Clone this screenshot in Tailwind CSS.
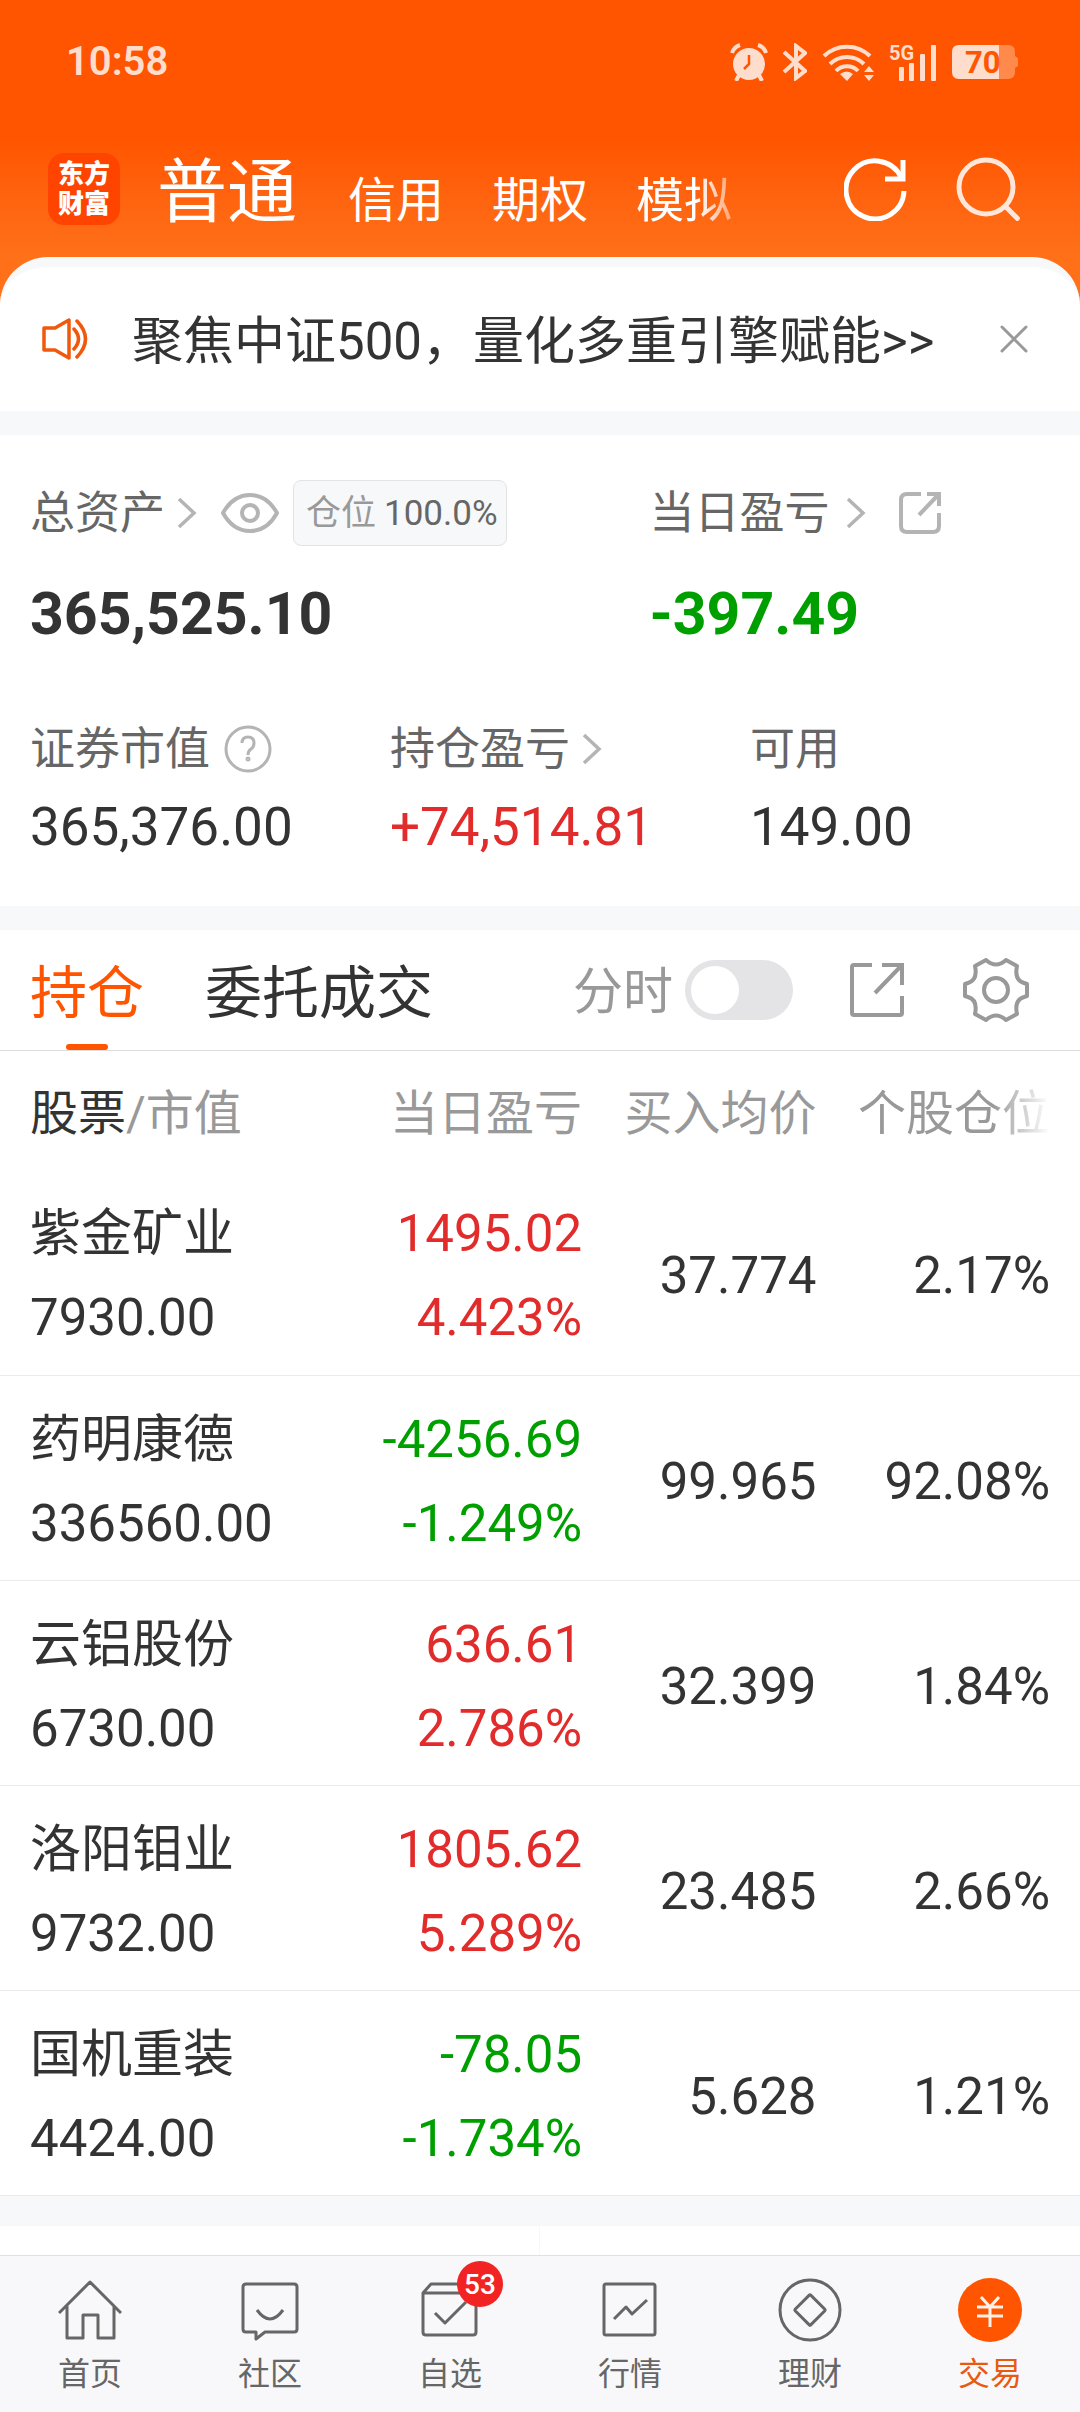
<!DOCTYPE html>
<html lang="zh-CN">
<head>
  <meta charset="UTF-8" />
  <meta name="viewport" content="width=device-width, initial-scale=1.0" />
  <title>东方财富 | 交易</title>

  <!-- Tailwind CSS -->
  <script src="https://cdn.jsdelivr.net/npm/@tailwindcss/browser@4"></script>

  <style>
    body {
      font-family: Roboto, 'Noto Sans CJK SC', sans-serif;
    }
  </style>
</head>

<body class="bg-white text-[#333] min-h-screen flex flex-col">

  <!-- Top Area -->
  <div class="bg-linear-to-b from-[#ff5500] from-34% to-[#ff7019] to-62%">

    <!-- Status Bar -->
    <div class="flex items-center justify-between h-[124px] pl-[66px] pr-[62px] text-[#ffddcc]">
      <span class="text-[40px] leading-none font-semibold">10:58</span>
      <div class="flex items-center gap-[15px]">
        <svg class="w-[38px] h-[38px]" viewBox="0 0 38 38" fill="none">
          <circle cx="19" cy="21" r="16" fill="currentColor" />
          <path d="M2 10A12 12 0 0 1 10 2M36 10A12 12 0 0 0 28 2" stroke="currentColor" stroke-width="4" />
          <path d="M9 32l-3 6M29 32l3 6" stroke="currentColor" stroke-width="4" />
          <path d="M19 12v9l-5 5" stroke="#ff5500" stroke-width="2.5" />
        </svg>
        <svg class="w-6 h-[38px]" viewBox="0 0 24 38" fill="none" stroke="currentColor" stroke-width="4">
          <path d="M1 9l21 19-9 7V3l9 7L1 29" />
        </svg>
        <svg class="w-[52px] h-[38px]" viewBox="0 0 52 38" fill="none">
          <path d="M2 13a33 33 0 0 1 46 0M8 21a24 24 0 0 1 34 0M14 28a15 15 0 0 1 22 0" stroke="currentColor" stroke-width="4" />
          <path d="M18 31q7-5 13 0l-6 7zM42 29l5-6 5 6zM42 32h10l-5 6z" fill="currentColor" />
        </svg>
        <svg class="w-12 h-[38px] overflow-visible" viewBox="0 0 48 38" fill="currentColor">
          <text x="0" y="17" font-size="20" font-weight="700">5G</text>
          <rect x="10" y="24" width="5" height="14" rx="1" />
          <rect x="20" y="20" width="5" height="18" rx="1" />
          <rect x="31" y="11" width="5" height="27" rx="1" />
          <rect x="42" y="2" width="5" height="36" rx="1" />
        </svg>
        <svg class="w-[66px] h-[34px] overflow-visible" viewBox="0 0 66 34">
          <path d="M47 0h9q7 0 7 7v4l3 2v8l-3 2v4q0 7-7 7h-9z" fill="#ff8a4c" />
          <path d="M47 0H7Q0 0 0 7v20q0 7 7 7h40z" fill="currentColor" />
          <text x="13" y="28" font-size="31" font-weight="700" fill="#ff5500">70</text>
        </svg>
      </div>
    </div>

    <!-- Account Tabs -->
    <header class="flex items-center h-[133px] pl-12 pr-[60px] pb-[4px] text-white">
      <div class="w-[72px] h-[72px] rounded-2xl bg-[#ff4400] flex items-center justify-center text-center text-[26px] leading-[30px] font-black">
        <span>东方<br />财富</span>
      </div>
      <nav class="flex items-baseline gap-12 ml-[37px] pt-2 text-5xl leading-none">
        <a href="#" class="text-[70px] mr-[3px]">普通</a>
        <a href="#">信用</a>
        <a href="#">期权</a>
        <a href="#" class="[mask-image:linear-gradient(to_right,black_65%,rgba(0,0,0,0.4))]">模拟</a>
      </nav>
      <div class="flex gap-12 ml-auto">
        <button type="button" aria-label="刷新">
          <svg class="w-16 h-16" viewBox="0 0 64 64" fill="none" stroke="currentColor" stroke-width="5">
            <path d="M60 34A29 29 0 1 1 57 20" />
            <path d="M59 3v19H41" />
          </svg>
        </button>
        <button type="button" aria-label="搜索">
          <svg class="w-16 h-16" viewBox="0 0 64 64" fill="none" stroke="#ffe6d9" stroke-width="5">
            <circle cx="30" cy="30" r="27" />
            <path d="M49 49l14 14" />
          </svg>
        </button>
      </div>
    </header>

    <!-- Notice Bar -->
    <div class="bg-white border-t-[10px] border-[#f7f8fa] rounded-t-[48px] h-[154px] flex items-center pl-[42px] pr-12">
      <svg class="w-12 h-12" viewBox="0 0 48 48" fill="none" stroke="#f0580c" stroke-width="3.5" stroke-linejoin="round" stroke-linecap="round">
        <path d="M2 13h11l14-8v38l-14-8H2z" />
        <path d="M32 14q9 10 0 20M35 6q17 18 0 36" />
      </svg>
      <a href="#" class="ml-[42px] pt-[5px] text-[51px] leading-none whitespace-nowrap">聚焦中证500，量化多重引擎赋能&gt;&gt;</a>
      <button type="button" class="ml-auto" aria-label="关闭">
        <svg class="w-9 h-9" viewBox="0 0 36 36" stroke="#999" stroke-width="3" stroke-linecap="round">
          <path d="M6 6l24 24M30 6L6 30" />
        </svg>
      </button>
    </div>
  </div>

  <!-- Asset Summary -->
  <section class="border-t-[24px] border-[#f7f8fa] pl-[30px] pt-[45px] h-[495px]">
    <div class="grid grid-cols-[59fr_41fr]">
      <div>
        <div class="flex items-center h-[66px] text-[45px] leading-none text-[#666]">
          总资产
          <svg class="w-5 h-8 ml-3" viewBox="0 0 20 32" fill="none" stroke="#b4b4b4" stroke-width="3.5"><path d="M2 2l15 14L2 30" /></svg>
          <button type="button" class="ml-6" aria-label="隐藏金额">
            <svg class="w-[58px] h-10" viewBox="0 0 58 40" fill="none" stroke="#b4b4b4" stroke-width="4" stroke-linejoin="round">
              <path d="M2 20Q12 2 29 2t27 18q-10 18-27 18T2 20z" />
              <circle cx="29" cy="20" r="8" />
            </svg>
          </button>
          <span class="ml-[14px] h-[66px] pl-3 pr-2 flex items-center gap-2 border border-[#e2e3e5] rounded-lg bg-[#f7f8fa] text-[35px]"><span class="text-[#999]">仓位</span>100.0%</span>
        </div>
        <p class="mt-8 text-[59px] leading-[72px] font-bold">365,525.10</p>
      </div>
      <div>
        <div class="flex items-center h-[66px] text-[45px] leading-none text-[#666]">
          当日盈亏
          <svg class="w-5 h-8 ml-4" viewBox="0 0 20 32" fill="none" stroke="#b4b4b4" stroke-width="3.5"><path d="M2 2l15 14L2 30" /></svg>
          <button type="button" class="ml-8" aria-label="分享">
            <svg class="w-11 h-11" viewBox="0 0 44 44" fill="none" stroke="#b4b4b4" stroke-width="4">
              <path d="M23 3H9Q3 3 3 9v26q0 6 6 6h26q6 0 6-6V22" />
              <path d="M29 3h12v12M41 3L21 24" />
            </svg>
          </button>
        </div>
        <p class="mt-8 text-[59px] leading-[72px] font-bold text-[#009f00]">-397.49</p>
      </div>
    </div>

    <div class="grid grid-cols-[36fr_36fr_33fr] mt-[66px]">
      <div>
        <div class="flex items-center h-[66px] text-[45px] leading-none text-[#666]">
          证券市值
          <svg class="w-12 h-12 ml-[14px]" viewBox="0 0 48 48" fill="none" stroke="#b4b4b4" stroke-width="3">
            <circle cx="24" cy="24" r="22" />
            <path d="M18 18q0-6 6-6t6 6q0 4-3 6t-3 6" />
            <circle cx="24" cy="34" r="1" />
          </svg>
        </div>
        <p class="mt-3 text-[53px] leading-[66px]">365,376.00</p>
      </div>
      <div>
        <div class="flex items-center h-[66px] text-[45px] leading-none text-[#666]">
          持仓盈亏
          <svg class="w-5 h-8 ml-3" viewBox="0 0 20 32" fill="none" stroke="#b4b4b4" stroke-width="3.5"><path d="M2 2l15 14L2 30" /></svg>
        </div>
        <p class="mt-3 text-[53px] leading-[66px] text-[#e22b2b]">+74,514.81</p>
      </div>
      <div>
        <div class="flex items-center h-[66px] text-[45px] leading-none text-[#666]">可用</div>
        <p class="mt-3 text-[53px] leading-[66px]">149.00</p>
      </div>
    </div>
  </section>

  <!-- Holdings Tabs -->
  <section class="border-t-[24px] border-[#f7f8fa]">
    <div class="flex items-center h-[121px] pl-[30px] pr-[51px] border-b border-[#ddd]">
      <a href="#" class="relative h-full flex items-center pt-[6px] text-[57px] leading-none text-[#ff5500]">
        持仓
        <span class="absolute bottom-0 left-1/2 -translate-x-1/2 w-[42px] h-[6px] rounded-full bg-[#ff5500]"></span>
      </a>
      <a href="#" class="ml-[61px] pt-[6px] text-[57px] leading-none">委托成交</a>
      <label for="timeline" class="ml-auto pt-1 text-[50px] leading-none text-[#999]">分时</label>
      <input type="checkbox" id="timeline"
        class="appearance-none ml-3 w-[108px] h-[60px] rounded-full bg-[#e4e4e6] p-[6px] flex before:block before:w-12 before:h-12 before:rounded-full before:bg-white" />
      <button type="button" class="ml-14" aria-label="导出">
        <svg class="w-14 h-14" viewBox="0 0 56 56" fill="none" stroke="#999" stroke-width="4">
          <path d="M23 3H5q-2 0-2 2v46q0 2 2 2h46q2 0 2-2V34" />
          <path d="M33 3h20v20M53 3L26 31" />
        </svg>
      </button>
      <button type="button" class="ml-[58px]" aria-label="设置">
        <svg class="w-[66px] h-16" viewBox="0 0 66 64" fill="none" stroke="#999" stroke-width="4" stroke-linejoin="round">
          <path d="M23 2Q33 11 43 2L54 8Q51 22 61 25L64 26V38L61 39Q51 42 54 56L43 62Q33 53 23 62L12 56Q15 42 5 39L2 38V26L5 25Q15 22 12 8Z" />
          <circle cx="33" cy="32" r="12" />
        </svg>
      </button>
    </div>

    <!-- Holdings Table -->
    <table class="w-full table-fixed text-right text-[51px] leading-[84px]">
      <colgroup>
        <col class="w-[32.2%]" />
        <col class="w-[21.7%]" />
        <col class="w-[21.7%]" />
        <col />
      </colgroup>
      <thead>
        <tr class="h-[119px] text-5xl text-[#999] *:pt-[6px]">
          <th class="font-normal text-left pl-[30px]"><span class="text-[#333]">股票</span>/市值</th>
          <th class="font-normal whitespace-nowrap">当日盈亏</th>
          <th class="font-normal whitespace-nowrap">买入均价</th>
          <th class="font-normal whitespace-nowrap pr-[30px]"><span class="[mask-image:linear-gradient(to_right,black_70%,transparent)]">个股仓位</span></th>
        </tr>
      </thead>
      <tbody>
        <tr class="h-[205px] border-b border-[#ebebeb] *:pt-[8px]">
          <td class="text-left pl-[30px]">紫金矿业<br />7930.00</td>
          <td class="text-[#e22b2b]">1495.02<br />4.423%</td>
          <td>37.774</td>
          <td class="pr-[30px]">2.17%</td>
        </tr>
        <tr class="h-[205px] border-b border-[#ebebeb] *:pt-[8px]">
          <td class="text-left pl-[30px]">药明康德<br />336560.00</td>
          <td class="text-[#009f00]">-4256.69<br />-1.249%</td>
          <td>99.965</td>
          <td class="pr-[30px]">92.08%</td>
        </tr>
        <tr class="h-[205px] border-b border-[#ebebeb] *:pt-[8px]">
          <td class="text-left pl-[30px]">云铝股份<br />6730.00</td>
          <td class="text-[#e22b2b]">636.61<br />2.786%</td>
          <td>32.399</td>
          <td class="pr-[30px]">1.84%</td>
        </tr>
        <tr class="h-[205px] border-b border-[#ebebeb] *:pt-[8px]">
          <td class="text-left pl-[30px]">洛阳钼业<br />9732.00</td>
          <td class="text-[#e22b2b]">1805.62<br />5.289%</td>
          <td>23.485</td>
          <td class="pr-[30px]">2.66%</td>
        </tr>
        <tr class="h-[205px] border-b border-[#ebebeb] *:pt-[8px]">
          <td class="text-left pl-[30px]">国机重装<br />4424.00</td>
          <td class="text-[#009f00]">-78.05<br />-1.734%</td>
          <td>5.628</td>
          <td class="pr-[30px]">1.21%</td>
        </tr>
      </tbody>
    </table>
  </section>

  <!-- Next Section (cut off by the tab bar) -->
  <section class="grow border-t-[30px] border-[#f7f8fa] grid grid-cols-2">
    <div class="border-r border-[#f7f8fa]"></div>
    <div></div>
  </section>

  <!-- Bottom Tab Bar -->
  <nav class="sticky bottom-0 grid grid-cols-6 h-[157px] pt-[22px] border-t border-[#e0e0e2] bg-[#f8f8fa] text-[32px] leading-[64px] text-[#666]">
    <a href="#" class="flex flex-col items-center">
      <svg class="w-16 h-16" viewBox="0 0 64 64" fill="none" stroke="currentColor" stroke-width="3">
        <path d="M1 35L32 4l31 31M9 28v32h16V37h15v23h16V28" stroke-linejoin="round" />
      </svg>
      首页
    </a>
    <a href="#" class="flex flex-col items-center">
      <svg class="w-16 h-16" viewBox="0 0 64 64" fill="none" stroke="currentColor" stroke-width="3" stroke-linejoin="round">
        <path d="M8 6h48q3 0 3 3v42q0 3-3 3H27l-9 7v-7H8q-3 0-3-3V9q0-3 3-3z" />
        <path d="M19 32q13 18 26 0" />
      </svg>
      社区
    </a>
    <a href="#" class="flex flex-col items-center relative">
      <svg class="w-16 h-16" viewBox="0 0 64 64" fill="none" stroke="currentColor" stroke-width="3" stroke-linejoin="round">
        <path d="M5 15l8-9h38l7 9v39q0 3-3 3H8q-3 0-3-3zM5 15h53" />
        <path d="M17 35l10 10 21-21" />
      </svg>
      自选
      <span class="absolute -top-[17px] left-[97px] w-[46px] h-[46px] rounded-full bg-[#f22323] text-white text-[28px] leading-[48px] font-medium text-center">53</span>
    </a>
    <a href="#" class="flex flex-col items-center">
      <svg class="w-16 h-16" viewBox="0 0 64 64" fill="none" stroke="currentColor" stroke-width="3" stroke-linejoin="round">
        <rect x="6" y="6" width="51" height="51" rx="2" />
        <path d="M16 41l12-12 6 7 15-14" />
      </svg>
      行情
    </a>
    <a href="#" class="flex flex-col items-center">
      <svg class="w-16 h-16" viewBox="0 0 64 64" fill="none" stroke="currentColor" stroke-width="3" stroke-linejoin="round">
        <circle cx="32" cy="32" r="30" />
        <rect x="21" y="21" width="22" height="22" rx="1" transform="rotate(45 32 32)" />
      </svg>
      理财
    </a>
    <a href="#" class="flex flex-col items-center text-[#e85a10]">
      <svg class="w-16 h-16" viewBox="0 0 64 64" fill="none" stroke="#fff0e8" stroke-width="3">
        <circle cx="32" cy="32" r="32" fill="#ff5500" stroke="none" />
        <path d="M23 19l9 10 9-10M32 29v20M19 29h26M19 38h26" />
      </svg>
      交易
    </a>
  </nav>
</body>
</html>
